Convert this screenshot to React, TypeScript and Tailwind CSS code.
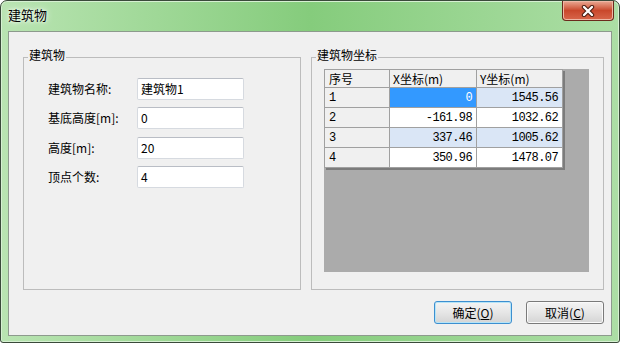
import React from "react";

const cjk = "font-['Noto_Sans_CJK_SC','Noto_Sans',sans-serif]";
const mono = "font-['Liberation_Mono','Noto_Sans_CJK_SC',monospace]";

const fields = [
  { label: "建筑物名称:", value: "建筑物1" },
  { label: "基底高度[m]:", value: "0" },
  { label: "高度[m]:", value: "20" },
  { label: "顶点个数:", value: "4" },
];

type Row = { id: string; x: string; y: string; xBg: string; yBg: string; xSel?: boolean };

const rows: Row[] = [
  { id: "1", x: "0", y: "1545.56", xBg: "bg-[#3399ff]", yBg: "bg-[#dae6f6]", xSel: true },
  { id: "2", x: "-161.98", y: "1032.62", xBg: "bg-white", yBg: "bg-white" },
  { id: "3", x: "337.46", y: "1005.62", xBg: "bg-[#dae6f6]", yBg: "bg-[#dae6f6]" },
  { id: "4", x: "350.96", y: "1478.07", xBg: "bg-white", yBg: "bg-white" },
];

const CloseGlyph = () => (
  <svg width="16" height="12" viewBox="0 0 16 12">
    <path d="M4 2 L12 10 M12 2 L4 10" stroke="#4a1c10" strokeWidth="4.4" strokeLinecap="round" fill="none" />
    <path d="M4 2 L12 10 M12 2 L4 10" stroke="#ffffff" strokeWidth="2.4" strokeLinecap="round" fill="none" />
  </svg>
);

const Button = ({ text, hotkey, primary }: { text: string; hotkey: string; primary?: boolean }) => (
  <button
    className={`w-[78px] h-[23px] rounded-[3px] border ${
      primary ? "border-[#3c8fd0] shadow-[inset_0_0_0_1px_#b6e4f7]" : "border-[#7a7a7a] shadow-[inset_0_0_0_1px_#fafafa]"
    } bg-gradient-to-b from-[#f4f4f4] via-[#e6e6e6] to-[#d4d4d4] text-[12px] leading-[14px] text-black ${cjk}`}
  >
    {text}(<span className="underline">{hotkey}</span>)
  </button>
);

export default function App() {
  return (
    <div className="w-[620px] h-[343px] flex flex-col rounded-t-[7px] rounded-b-[3px] border border-[#3a4a3a] bg-gradient-to-r from-[#b9e4b2] via-[#85cc7c] to-[#acdea5] shadow-[inset_0_0_0_1px_#d6f0d2]">
      {/* title bar */}
      <div className="h-[30px] flex items-start justify-between pl-[7px] pr-[5px]">
        <span className={`mt-[6px] text-[13px] leading-[16px] text-black ${cjk} [text-shadow:0_0_7px_#ffffff,0_0_3px_#ffffff]`}>
          建筑物
        </span>
        <div className="w-[52px] h-[20px] flex items-center justify-center rounded-b-[4px] border border-t-0 border-[#6b2a1c] bg-gradient-to-b from-[#e9a994] via-[#c9482c] to-[#d8664a] shadow-[inset_0_0_0_1px_#eeb8a6]">
          <CloseGlyph />
        </div>
      </div>

      {/* client area */}
      <div className="flex-1 mx-[7px] mb-[6px] border border-[#8d9a8d] bg-[#f0f0f0] pl-[14px] pr-[7px] pt-[15px]">
        <div className="flex gap-[10px]">
          <fieldset className="w-[278px] h-[243px] border border-[#bcbcbc] px-[4px]">
            <legend className={`px-[1px] pb-[4px] text-[12px] leading-[16px] text-black ${cjk}`}>建筑物</legend>
            <div className="pt-[11px] ml-[20px] flex flex-col gap-[7.3px]">
              {fields.map((f) => (
                <div key={f.label} className="flex items-center h-[22px]">
                  <span className={`w-[89px] text-[12px] leading-[14px] text-black ${cjk}`}>{f.label}</span>
                  <div className={`w-[107px] h-[22px] flex items-center pl-[3px] rounded-[2px] bg-white border border-[#d6dae0] border-t-[#b9bdc5] text-[12px] leading-[14px] text-black ${cjk}`}>
                    {f.value}
                  </div>
                </div>
              ))}
            </div>
          </fieldset>

          <fieldset className="w-[293px] h-[243px] border border-[#bcbcbc] px-[4px]">
            <legend className={`px-[1px] pb-[4px] text-[12px] leading-[16px] text-black ${cjk}`}>建筑物坐标</legend>
            <div className="pt-[2px] ml-[8px]">
              <div className="w-[265px] h-[203px] bg-[#ababab]">
                <div className="w-[239px] border-l border-t border-[#a0a0a0] shadow-[2px_2px_0_#7c7c7c]">
                  <div className={`grid grid-cols-[65px_87px_86px] h-[18px] text-[12px] leading-[14px] text-black ${cjk}`}>
                    <div className="bg-[#f0f0f0] border-r border-b border-[#a0a0a0] pl-[4px] flex items-center">序号</div>
                    <div className="bg-[#f0f0f0] border-r border-b border-[#a0a0a0] pl-[3px] flex items-center">X坐标(m)</div>
                    <div className="bg-[#f0f0f0] border-r border-b border-[#a0a0a0] pl-[3px] flex items-center">Y坐标(m)</div>
                  </div>
                  {rows.map((r) => (
                    <div key={r.id} className={`grid grid-cols-[65px_87px_86px] h-[20px] text-[12px] leading-[14px] tracking-[-0.6px] ${mono}`}>
                      <div className="bg-[#f0f0f0] border-r border-b border-[#a0a0a0] pl-[4px] flex items-center text-black">{r.id}</div>
                      <div className={`${r.xBg} border-r border-b border-[#a0a0a0] pr-[4px] flex items-center justify-end ${r.xSel ? "text-white" : "text-black"}`}>
                        {r.x}
                      </div>
                      <div className={`${r.yBg} border-r border-b border-[#a0a0a0] pr-[4px] flex items-center justify-end text-black`}>
                        {r.y}
                      </div>
                    </div>
                  ))}
                </div>
              </div>
            </div>
          </fieldset>
        </div>

        <div className="mt-[11px] flex justify-end gap-[14px]">
          <Button text="确定" hotkey="O" primary />
          <Button text="取消" hotkey="C" />
        </div>
      </div>
    </div>
  );
}
